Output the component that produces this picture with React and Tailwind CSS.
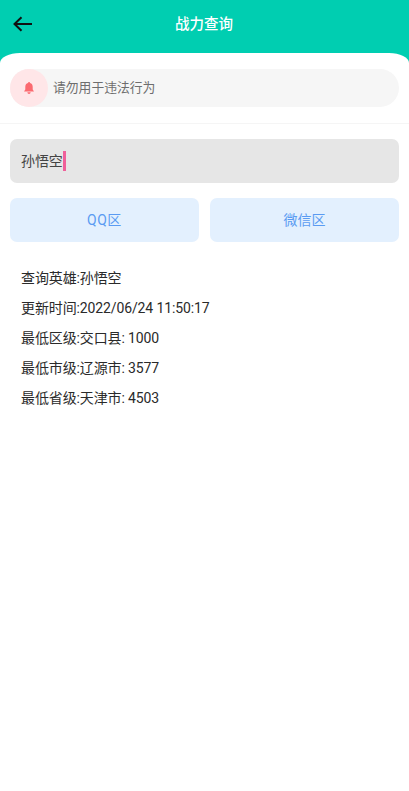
import React from 'react';

const results = [
  '查询英雄:孙悟空',
  '更新时间:2022/06/24 11:50:17',
  '最低区级:交口县: 1000',
  '最低市级:辽源市: 3577',
  '最低省级:天津市: 4503',
];

function BackArrow() {
  return (
    <svg width="20" height="16" viewBox="0 0 20 16" fill="none" stroke="#111" strokeWidth="2">
      <path d="M1.5 8H19" />
      <path d="M8.5 1.2L1.5 8L8.5 14.8" />
    </svg>
  );
}

function Bell() {
  return (
    <svg width="12" height="14" viewBox="0 0 12 13" fill="#fb6a70">
      <path d="M6 0.5C6.6 0.5 7 0.9 7 1.4C8.8 1.9 9.7 3.3 9.7 5.2V8L11 10H1L2.3 8V5.2C2.3 3.3 3.2 1.9 5 1.4C5 0.9 5.4 0.5 6 0.5Z" />
      <path d="M4.4 10.8H7.6C7.5 11.8 6.9 12.4 6 12.4C5.1 12.4 4.5 11.8 4.4 10.8Z" />
    </svg>
  );
}

export default function App() {
  return (
    <div className="min-h-[791px] bg-[#00ceb1] font-['Roboto','Noto_Sans_CJK_SC',sans-serif]">
      <div className="relative flex h-[53px] items-center justify-center pb-[4px]">
        <div className="absolute left-[13px] top-[16px] flex">
          <BackArrow />
        </div>
        <h1 className="pr-[1px] text-[14.5px] font-medium text-white">战力查询</h1>
      </div>

      <div className="min-h-[738px] rounded-tl-[20px_10px] rounded-tr-[20px_10px] bg-white">
        <div className="border-b border-[#f5f5f5] px-[10px] pb-[16px] pt-[16px]">
          <div className="flex h-[38px] items-center rounded-full bg-[#f6f6f6]">
            <div className="flex h-[38px] w-[38px] items-center justify-center rounded-full bg-[#ffe6e8] pb-[1px]">
              <Bell />
            </div>
            <span className="ml-[5px] text-[12.8px] text-[#6e6e6e]">请勿用于违法行为</span>
          </div>
        </div>

        <div className="px-[10px] pt-[15px]">
          <div className="flex h-[44px] items-center rounded-[7px] bg-[#e6e6e6] px-[11px]">
            <span className="text-[14px] tracking-[-0.1px] text-[#444]">孙悟空</span>
            <span className="h-[20px] w-[3px] bg-[#f0609a]" />
          </div>

          <div className="mt-[15px] flex gap-[11px]">
            <button className="h-[44px] flex-1 rounded-[7px] bg-[#e3f0fe] text-[14px] tracking-[0.5px] text-[#5a9bf2]">QQ区</button>
            <button className="h-[44px] flex-1 rounded-[7px] bg-[#e3f0fe] text-[14px] text-[#5a9bf2]">微信区</button>
          </div>

          <div className="mt-[26px] flex flex-col gap-[10px] px-[11px]">
            {results.map((line) => (
              <p key={line} className="text-[14px] leading-[20px] tracking-[-0.12px] text-[#2a2a2a]">{line}</p>
            ))}
          </div>
        </div>
      </div>
    </div>
  );
}
